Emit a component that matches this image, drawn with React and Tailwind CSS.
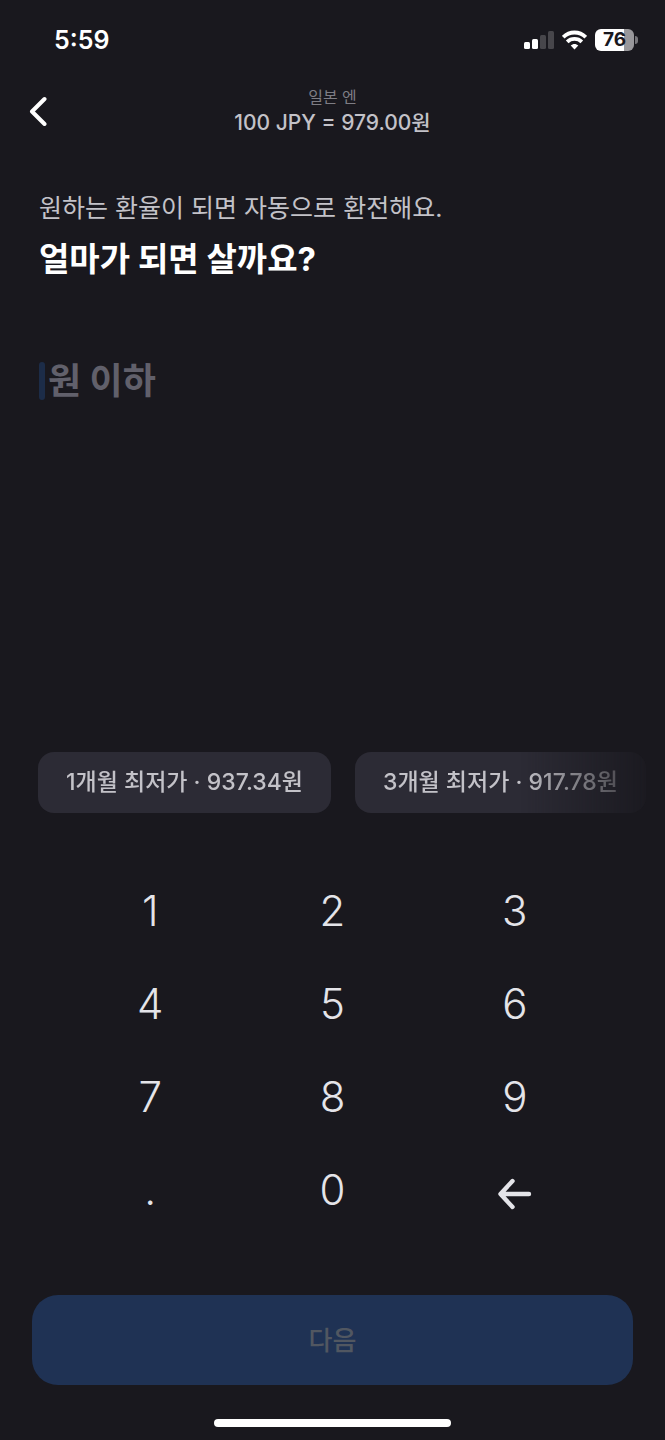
import { useState } from 'react';

const presets = [
  { label: '1개월 최저가', value: '937.34' },
  { label: '3개월 최저가', value: '917.78' },
];

const keys = ['1', '2', '3', '4', '5', '6', '7', '8', '9', '.', '0'];

const StatusBar = () => {
  return (
    <div className="flex h-20 items-center justify-between pl-[54px] pr-[27px]">
      <span className="text-[25px] font-semibold leading-8 text-white">5:59</span>
      <div className="flex items-center gap-2">
        <svg width="30" height="20" viewBox="0 0 30 20" fill="#fff" aria-hidden="true">
          <rect x="0" y="12" width="6" height="7" rx="1.5" />
          <rect x="8" y="9" width="6" height="10" rx="1.5" />
          <rect x="16" y="5" width="6" height="14" rx="1.5" fill="#47464b" />
          <rect x="24" y="1" width="6" height="18" rx="1.5" fill="#47464b" />
        </svg>
        <svg width="25" height="20" viewBox="0 0 25 20" aria-hidden="true">
          <g fill="none" stroke="#fff" strokeWidth="3.8">
            <path d="M1.2 7.2C7.5 0.9 17.5 0.9 23.8 7.2" />
            <path d="M5.2 11.8C9.2 7.9 15.8 7.9 19.8 11.8" />
          </g>
          <path d="M12.5 19.4L8.7 15.6C10.8 13.5 14.2 13.5 16.3 15.6Z" fill="#fff" />
        </svg>
        <div className="flex items-center gap-px">
          <div className="flex h-[22px] w-[39px] items-center justify-center rounded-[6px] bg-linear-to-r from-white from-75% to-[#98979b] to-75% text-[19px] font-bold leading-6 text-[#19181e]">
            76
          </div>
          <div className="h-2 w-[3px] rounded-r-full bg-[#77767b]" />
        </div>
      </div>
    </div>
  );
};

const App = () => {
  const [price, setPrice] = useState('');

  const handleKey = key => {
    if (key === '.' && price.includes('.')) return;
    setPrice(prev => prev + key);
  };

  return (
    <main className="flex min-h-screen flex-col bg-[#19181e] font-['Inter','Noto_Sans_CJK_KR',sans-serif]">
      <StatusBar />

      <header className="grid h-[62px] grid-cols-[60px_1fr_60px] items-center">
        <button type="button" aria-label="뒤로" className="pl-[29px]">
          <svg width="18" height="30" viewBox="0 0 18 30" fill="none" aria-hidden="true">
            <path
              d="M15.5 3L3 15.5L15.5 28"
              stroke="#fff"
              strokeWidth="4"
              strokeLinecap="round"
              strokeLinejoin="round"
            />
          </svg>
        </button>
        <div className="text-center">
          <p className="text-[16px] leading-6 text-[#7e7d84]">일본 엔</p>
          <p className="text-[21px] font-medium leading-7 text-[#c3c2c8]">100 JPY = 979.00원</p>
        </div>
      </header>

      <section className="px-[39px] pt-12">
        <p className="text-[25px] leading-9 text-[#c3c2c8]">원하는 환율이 되면 자동으로 환전해요.</p>
        <h1 className="mt-[9px] text-[33px] font-bold leading-12 text-white">
          <label htmlFor="price">얼마가 되면 살까요?</label>
        </h1>
        <div className="mt-[70px] flex items-center gap-[3px]">
          {!price && <span className="h-[38px] w-[6px] rounded-full bg-[#1c2c48]" />}
          <input
            id="price"
            type="text"
            inputMode="none"
            value={price}
            onChange={e => setPrice(e.target.value)}
            placeholder="원 이하"
            className="h-14 w-full bg-transparent text-[36px] font-bold text-white outline-none placeholder:text-[#61606b]"
          />
        </div>
      </section>

      <div className="mt-auto flex gap-6 overflow-hidden pl-[38px] mask-r-from-[calc(100%-145px)] mask-r-to-100%">
        {presets.map(preset => (
          <button
            key={preset.label}
            type="button"
            onClick={() => setPrice(preset.value)}
            className="h-[61px] shrink-0 whitespace-nowrap rounded-2xl bg-[#2c2b35] px-7 text-[23px] font-medium text-[#c3c2c8]"
          >
            {preset.label} · {preset.value}원
          </button>
        ))}
      </div>

      <div className="mt-[51px] grid grid-cols-3 px-[59px]">
        {keys.map(key => (
          <button
            key={key}
            type="button"
            onClick={() => handleKey(key)}
            className="h-[93px] text-[42px] font-[350] text-[#e4e4e9]"
          >
            {key}
          </button>
        ))}
        <button
          type="button"
          aria-label="지우기"
          onClick={() => setPrice(prev => prev.slice(0, -1))}
          className="flex h-[93px] items-center justify-center pt-2"
        >
          <svg width="36" height="32" viewBox="0 0 36 32" fill="none" aria-hidden="true">
            <path
              d="M15.5 3L3.5 16L15.5 29M4 16H32"
              stroke="#e4e4e9"
              strokeWidth="4.4"
              strokeLinecap="round"
              strokeLinejoin="round"
            />
          </svg>
        </button>
      </div>

      <footer className="flex flex-col items-center px-8 pb-[13px] pt-[59px]">
        <button
          type="button"
          disabled={!price}
          className="h-[90px] w-full rounded-[26px] bg-[#1f3254] text-[26px] font-medium text-[#515761]"
        >
          다음
        </button>
        <div className="mt-[34px] h-2 w-[237px] rounded-full bg-white" />
      </footer>
    </main>
  );
};

export default App;
